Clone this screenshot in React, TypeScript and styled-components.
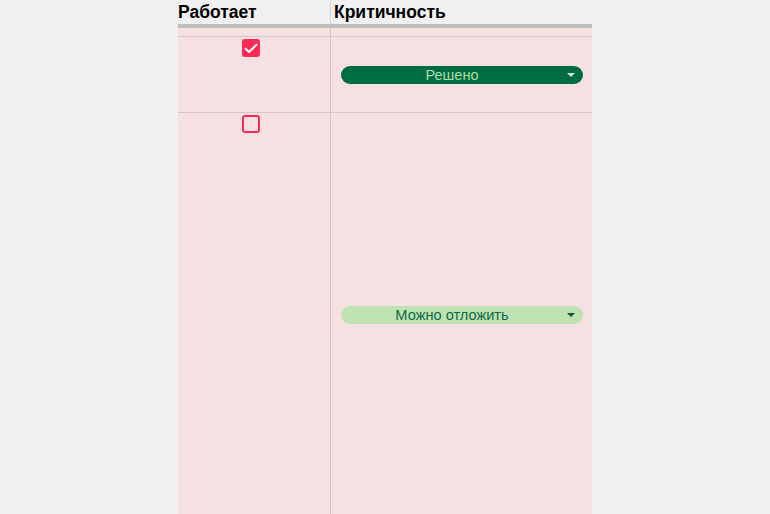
import React from "react";
import styled, { createGlobalStyle } from "styled-components";

const GlobalStyle = createGlobalStyle`
    body {
        margin: 0;
        background: #f0f0f0;
        font-family: "Liberation Sans", Arial, sans-serif;
        overflow: hidden;
    }
`;

const FIRST_COL = 153/* px, incl. border */;
const TABLE_WIDTH = 414/* px */;

const Table = styled.div`
    width: ${TABLE_WIDTH}px;
    margin: 0 auto;
    height: 514px;
    display: flex;
    flex-direction: column;
`;

const HeaderRow = styled.div`
    flex: none;
    height: 24px;
    display: grid;
    grid-template-columns: ${FIRST_COL}px 1fr;
    border-bottom: 4px solid #bdbdbd;
`;

const HeaderCell = styled.div<{ first?: boolean }>`
    box-sizing: border-box;
    padding-left: ${p => p.first ? 0 : 3}px;
    border-right: ${p => p.first ? '1px solid #d4d4d4' : 'none'};
    font-size: 17.5px;
    font-weight: bold;
    line-height: 24px;
    color: #000;
    white-space: nowrap;
`;

const Body = styled.div`
    flex: 1;
    background: #f5e0e2;
    display: flex;
    flex-direction: column;
`;

const Row = styled.div<{ height?: number }>`
    display: grid;
    grid-template-columns: ${FIRST_COL}px 1fr;
    height: ${p => p.height ? `${p.height}px` : 'auto'};
    flex: none;
    box-sizing: border-box;
    border-bottom: 1px solid #dcc3c6;
`;

const Cell = styled.div<{ first?: boolean }>`
    box-sizing: border-box;
    border-right: ${p => p.first ? '1px solid #d6c0c3' : 'none'};
`;

const CheckCell = styled(Cell)`
    display: flex;
    justify-content: center;
    align-items: flex-start;
    padding: 2px 6px 0 0;
`;

const Box = styled.div<{ checked: boolean }>`
    width: 18px;
    height: 18px;
    box-sizing: border-box;
    border-radius: 3px;
    border: 2px solid #fb2a55;
    background: ${p => p.checked ? '#fb2a55' : 'transparent'};
    display: flex;
    align-items: center;
    justify-content: center;
`;

const SelectCell = styled(Cell)`
    display: flex;
    align-items: center;
    padding: 0 9px 0 10px;
`;

const Pill = styled.div<{ tone: 'dark' | 'light' }>`
    flex: 1;
    height: 18px;
    border-radius: 9px;
    display: flex;
    align-items: center;
    background: ${p => p.tone === 'dark' ? '#006c43' : '#bfe2b3'};
    color: ${p => p.tone === 'dark' ? '#a9dfa6' : '#0b6a48'};
    font-size: 14.6px;
`;

const PillText = styled.span`
    flex: 1;
    text-align: center;
    line-height: 18px;
    white-space: nowrap;
`;

const Arrow = styled.span<{ tone: 'dark' | 'light' }>`
    width: 16px;
    margin-right: 4px;
    display: flex;
    justify-content: center;

    &::after {
        content: "";
        border-left: 4px solid transparent;
        border-right: 4px solid transparent;
        border-top: 4px solid ${p => p.tone === 'dark' ? '#d2eecf' : '#005c3a'};
    }
`;

function Check({ checked }: { checked: boolean }) {
    return (
        <Box checked={checked}>
            {checked && (
                <svg width="14" height="11" viewBox="0 0 14 11">
                    <path d="M1.5 5.6 L5 9 L12.5 1.8" fill="none" stroke="#fff" strokeWidth="2" strokeLinecap="round" strokeLinejoin="round" />
                </svg>
            )}
        </Box>
    );
}

function Select({ label, tone }: { label: string; tone: 'dark' | 'light' }) {
    return (
        <Pill tone={tone}>
            <PillText>{label}</PillText>
            <Arrow tone={tone} />
        </Pill>
    );
}

const rows = [
    { works: true, level: 'Решено', tone: 'dark' as const, height: 76 },
    { works: false, level: 'Можно отложить', tone: 'light' as const, height: 404 },
];

export default function App() {
    return (
        <>
            <GlobalStyle />
            <Table>
                <HeaderRow>
                    <HeaderCell first>Работает</HeaderCell>
                    <HeaderCell>Критичность</HeaderCell>
                </HeaderRow>
                <Body>
                    <Row height={9}>
                        <Cell first />
                        <Cell />
                    </Row>
                    {rows.map((r, i) => (
                        <Row key={i} height={r.height}>
                            <CheckCell first>
                                <Check checked={r.works} />
                            </CheckCell>
                            <SelectCell>
                                <Select label={r.level} tone={r.tone} />
                            </SelectCell>
                        </Row>
                    ))}
                </Body>
            </Table>
        </>
    );
}
